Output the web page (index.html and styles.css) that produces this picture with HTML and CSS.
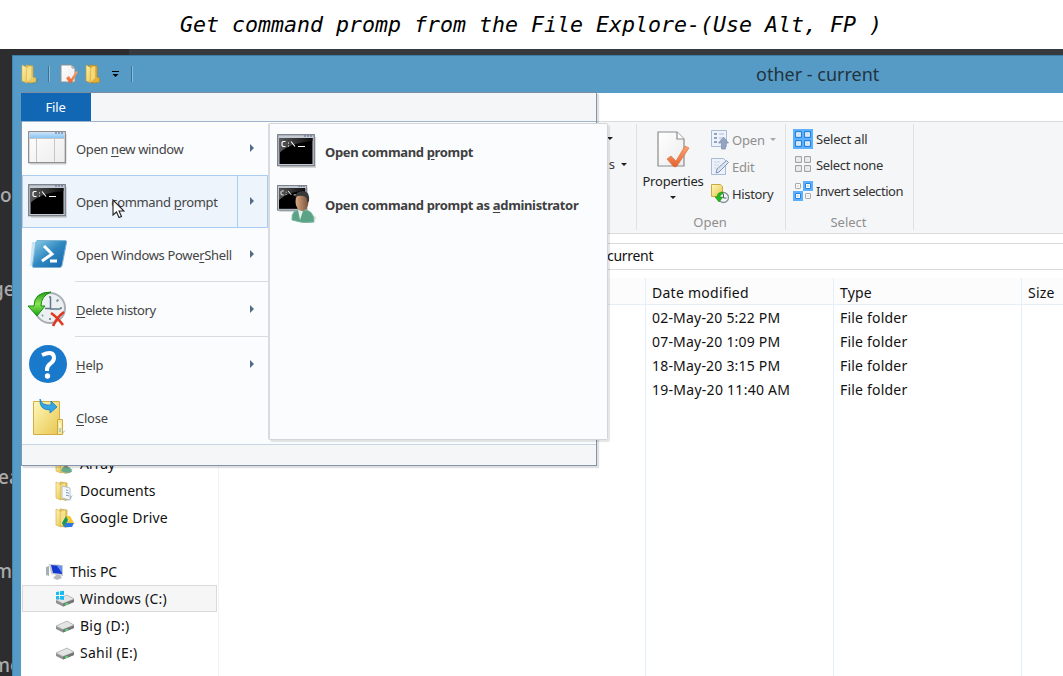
FILE: index.html
```html
<!DOCTYPE html>
<html lang="en">
<head>
<meta charset="utf-8">
<title>other - current</title>
<link rel="stylesheet" href="styles.css">
</head>
<body>
<svg class="defs" width="0" height="0" aria-hidden="true">
  <defs>
    <linearGradient id="gold" x1="0" y1="0" x2="1" y2="1"><stop offset="0" stop-color="#fff7b8"/><stop offset="1" stop-color="#e8c650"/></linearGradient>
    <linearGradient id="paper" x1="0" y1="0" x2="1" y2="1"><stop offset="0" stop-color="#fff"/><stop offset="1" stop-color="#ececec"/></linearGradient>
    <linearGradient id="sky" x1="0" y1="0" x2="0" y2="1"><stop offset="0" stop-color="#c3e2fb"/><stop offset="1" stop-color="#8cc4f4"/></linearGradient>
    <linearGradient id="shell" x1="0" y1="0" x2="1" y2="1"><stop offset="0" stop-color="#8ed0ea"/><stop offset=".5" stop-color="#2f87bf"/><stop offset="1" stop-color="#1565ad"/></linearGradient>
    <linearGradient id="gloss" x1="0" y1="0" x2="1" y2="0"><stop offset="0" stop-color="#5a5a5a"/><stop offset="1" stop-color="#0c0c0c"/></linearGradient>
    <linearGradient id="green" x1="0" y1="0" x2="0" y2="1"><stop offset="0" stop-color="#2a9a1c"/><stop offset=".5" stop-color="#8be455"/><stop offset="1" stop-color="#18a012"/></linearGradient>
    <linearGradient id="orange" x1="0" y1="0" x2="0" y2="1"><stop offset="0" stop-color="#f9a673"/><stop offset="1" stop-color="#e4632f"/></linearGradient>
    <linearGradient id="skin" x1="0" y1="0" x2="1" y2="0"><stop offset="0" stop-color="#d9a981"/><stop offset="1" stop-color="#765039"/></linearGradient>
    <symbol id="folder" viewBox="0 0 18 20">
      <path d="M13 17l5-3-3 5-6 1z" fill="#39718f" opacity=".45"/>
      <path d="M5 1l7 1v11l3 1v4l-5 1-5-1z" fill="#e6c965" stroke="#c4a03d" stroke-width=".7"/>
      <path d="M1 1l5 2.500V19l-5-2z" fill="url(#gold)" stroke="#d2b04e" stroke-width=".7"/>
      <path d="M6 4l4-2v12l-4 4z" fill="#f4df8b"/>
    </symbol>
    <symbol id="check" viewBox="0 0 34 38">
      <path d="M2 1h19l7 7v27H2z" fill="url(#paper)" stroke="#8c8c8c" stroke-width="1.2"/>
      <path d="M21 1v7h7" fill="#fff" stroke="#8c8c8c" stroke-width="1.2"/>
      <path d="M11 28l4-3 5 5 9-15 4 2-12 18q-2 2-4 0z" fill="url(#orange)" stroke="#d96532" stroke-width=".6"/>
    </symbol>
    <symbol id="console" viewBox="0 0 39 34">
      <path d="M3 33h36V3" fill="none" stroke="#c9c9c9" stroke-width="1.5"/>
      <rect x=".7" y=".7" width="36.6" height="31" fill="#c5cbd4" stroke="#747a84" stroke-width="1.2"/>
      <rect x="2.5" y="4" width="33" height="26" fill="#000"/>
      <path d="M2.500 4h33v3Q12 9 2.500 19z" fill="url(#gloss)"/>
      <path d="M27 2h2m1 0h2m1 0h2" stroke="#59658a"/>
      <path d="M8.500 7.500H6l-1 1v3l1 1h2.500M11.500 8.500v1m0 2v1M14 7.500l4 5M21 12.500h7" fill="none" stroke="#fff" stroke-width="1.1"/>
    </symbol>
    <symbol id="drive" viewBox="0 0 20 13">
      <path d="M1 6L12 1l7 4v3L8 12.500 1 9z" fill="#8e9091"/>
      <path d="M1 6L12 1l7 4L8 9.500z" fill="#e3e4e4" stroke="#a7a9a9" stroke-width=".6"/>
      <path d="M8 9.500l11-4v2.500L8 12.500z" fill="#717575"/>
      <path d="M10 10.500l3-1" stroke="#52e071" stroke-width="1.4"/>
    </symbol>
    <symbol id="tile" viewBox="0 0 6 6">
      <rect x=".5" y=".5" width="5" height="5" rx=".5" fill="#fafafa" stroke="currentColor"/>
      <rect x="2" y="2" width="2" height="2" fill="currentColor" opacity=".25"/>
    </symbol>
  </defs>
</svg>

<header class="caption">Get command promp from the File Explore-(Use Alt, FP )</header>

<main class="desktop">
  <aside class="backdrop">
    <span class="frag f1">o</span><span class="frag f2">ge</span><span class="frag f3">ea</span><span class="frag f4">m</span><span class="frag f5">me</span>
  </aside>

  <section class="window">
    <div class="titlebar">
      <div class="quick">
        <svg width="18" height="20"><use href="#folder"/></svg>
        <i class="bar"></i>
        <svg class="q-check" width="18" height="20" viewBox="0 0 18 20"><path d="M1 1h11l3 3v14H1z" fill="url(#paper)" stroke="#8d9296"/><path d="M12 1v3h3" fill="none" stroke="#8d9296"/><path d="M6 14l3-2 2 3 5-8 2 1-6 10q-2 2-3 0z" fill="url(#orange)"/></svg>
        <svg class="q-folder" width="18" height="20" viewBox="0 0 18 20"><path d="M5 1l7 1v11l2.500 1v4l-4.500 1-5-1z" fill="#e0b23c" stroke="#b98a1d" stroke-width=".8"/><path d="M1 1l5 2.500V19l-5-2z" fill="url(#gold)" stroke="#c79b2c" stroke-width=".8"/><path d="M6 4l4-2v12l-4 4z" fill="#f5d777"/></svg>
        <svg class="q-more" width="9" height="7" viewBox="0 0 9 7"><path d="M1 .5h7" stroke="#000"/><path d="M1.500 3h6l-3 3z"/></svg>
        <i class="bar"></i>
      </div>
      <h1 class="title">other - current</h1>
    </div>
    <div class="tabs"></div>

    <div class="ribbon">
      <div class="group g-prev">
        <i class="caret"></i>
        <span class="prev">s <i class="caret"></i></span>
      </div>
      <div class="group g-open">
        <div class="tools">
          <div class="big">
            <svg width="34" height="38"><use href="#check"/></svg>
            <span class="t-prop">Properties</span>
            <i class="caret"></i>
          </div>
          <div class="stack">
            <div class="tool off"><svg width="18" height="20" viewBox="0 0 18 20"><path d="M.5.500h15v16H.5z" fill="#eef3fb" stroke="#a9bbd6"/><path d="M3 3h3v2H3zm0 4h3v2H3zm0 4h3v2H3z" fill="#8ea3c5"/><path d="M8 4h5M8 8h3" stroke="#aebcd3"/><path d="M12.500 7l5 6h-3v6h-4v-6h-3z" fill="#93a4c1" stroke="#7e90b0" stroke-width=".7"/></svg><span class="t-open">Open</span><i class="caret"></i></div>
            <div class="tool off"><svg width="18" height="20" viewBox="0 0 18 20"><path d="M.5 1.500h12l2 2v14H.5z" fill="#edf2fa" stroke="#a9bbd6"/><path d="M3 5h6M3 8h5M3 11h3" stroke="#c8d4e6"/><path d="M5 16l1-4L15.500 3.500l2 2L8 15z" fill="#dce5f1" stroke="#7f94b6"/></svg><span class="t-edit">Edit</span></div>
            <div class="tool"><svg width="18" height="20" viewBox="0 0 18 20"><path d="M.5.500h9l2 2v10H.5z" fill="url(#gold)" stroke="#cda83c"/><circle cx="12.500" cy="13.500" r="5" fill="#f3f5f6" stroke="#86919a" stroke-width="1.300"/><path d="M12.500 10v4h3" fill="none" stroke="#536577"/><path d="M12 8q-6 0-6 5H4l4 5 4-5H9q0-3 3-3z" fill="#25b71b" stroke="#188312" stroke-width=".5"/></svg><span class="t-hist">History</span></div>
          </div>
        </div>
        <div class="label">Open</div>
      </div>
      <div class="group g-select">
        <div class="picks">
          <div class="tool"><svg width="20" height="20" viewBox="0 0 20 20" color="#2283dc"><path d="M0 0h20v20H0z" fill="#5db0ff"/><use href="#tile" x="2" y="2" width="7" height="7"/><use href="#tile" x="11" y="2" width="7" height="7"/><use href="#tile" x="2" y="11" width="7" height="7"/><use href="#tile" x="11" y="11" width="7" height="7"/></svg><span class="t-all">Select all</span></div>
          <div class="tool"><svg width="20" height="20" viewBox="0 0 20 20" color="#a3a3a3"><use href="#tile" x="2" y="1" width="7" height="7"/><use href="#tile" x="11" y="1" width="7" height="7"/><use href="#tile" x="2" y="10" width="7" height="7"/><use href="#tile" x="11" y="10" width="7" height="7"/></svg><span class="t-none">Select none</span></div>
          <div class="tool"><svg width="20" height="20" viewBox="0 0 20 20"><path d="M10 0h10v10H10zM0 10h10v10H0z" fill="#5db0ff"/><g color="#aaa"><use href="#tile" x="2" y="2" width="6" height="6"/><use href="#tile" x="12" y="12" width="6" height="6"/></g><g color="#2283dc"><use href="#tile" x="12" y="2" width="6" height="6"/><use href="#tile" x="2" y="12" width="6" height="6"/></g></svg><span class="t-inv">Invert selection</span></div>
        </div>
        <div class="label">Select</div>
      </div>
    </div>

    <div class="address"><span>current</span></div>

    <div class="content">
      <nav class="tree">
        <div class="node sub"><svg width="20" height="20" viewBox="0 0 20 20"><use href="#folder" width="18" height="20"/><circle cx="11" cy="10" r="3" fill="#a9795a"/><path d="M6 17q1-5 6-4 4 0 5 5-6 2-11-1z" fill="#66a98b"/></svg><span class="n-arr">Array</span></div>
        <div class="node sub"><svg width="20" height="20" viewBox="0 0 20 20"><use href="#folder" width="18" height="20"/><path d="M7 5l8 2v12l-8-2z" fill="#f4f8fc" stroke="#a9b7c4" stroke-width=".8"/><path d="M11 9l2 .5m-2 2l3 .7m-3 2l3 .7" stroke="#799bc5"/></svg><span class="n-doc">Documents</span></div>
        <div class="node sub"><svg width="20" height="20" viewBox="0 0 20 20"><use href="#folder" width="18" height="20"/><path d="M11 8h4l4 7h-4z" fill="#fbc42b"/><path d="M11 8l2 4-4 7-2-4z" fill="#159b54"/><path d="M11 15h8l-2 4H9z" fill="#2d76e8"/></svg><span class="n-drv">Google Drive</span></div>
        <div class="node"></div>
        <div class="node root"><svg width="20" height="18" viewBox="0 0 20 18"><path d="M1 4l3-1v10l-3-1z" fill="#a7b0b5"/><path d="M4 1l14 1v11L6 11z" fill="#c5ccd4"/><path d="M6 2l11 1v8L8 10z" fill="#1738d0"/><path d="M12 3h5v7z" fill="#6293f2"/><path d="M11 12h4l2 3-5 2-4-2z" fill="#b7bbbe"/></svg><span class="n-pc">This PC</span></div>
        <div class="node sub picked"><svg width="20" height="18" viewBox="0 0 20 18"><use href="#drive" y="4" width="20" height="13"/><path d="M1 2l3-.5v3.500H1zm4-.7L9 .8V5H5zM1 6h3v3.500L1 9zm4 0h4v4l-4-.5z" fill="#18bdf2"/></svg><span class="n-c">Windows (C:)</span></div>
        <div class="node sub"><svg width="20" height="14"><use href="#drive" y="1" width="20" height="13"/></svg><span class="n-d">Big (D:)</span></div>
        <div class="node sub"><svg width="20" height="14"><use href="#drive" y="1" width="20" height="13"/></svg><span class="n-e">Sahil (E:)</span></div>
      </nav>
      <div class="files">
        <div class="col"><div class="head"></div></div>
        <div class="col"><div class="head"><span class="h-date">Date modified</span></div><span class="d1">02-May-20 5:22 PM</span><span class="d1">07-May-20 1:09 PM</span><span class="d1">18-May-20 3:15 PM</span><span class="d2">19-May-20 11:40 AM</span></div>
        <div class="col"><div class="head"><span>Type</span></div><span class="ff">File folder</span><span class="ff">File folder</span><span class="ff">File folder</span><span class="ff">File folder</span></div>
        <div class="col"><div class="head"><span>Size</span></div></div>
      </div>
    </div>

    <div class="menu">
      <div class="menu-top"><span class="file-tab">File</span></div>
      <div class="menu-list">
        <div class="item"><svg width="39" height="34" viewBox="0 0 39 34"><path d="M2 33h36V3" fill="none" stroke="#ccc"/><rect x=".7" y=".7" width="36.600" height="31" fill="url(#paper)" stroke="#858585" stroke-width="1.200"/><path d="M1.500 1.500h35V7h-35z" fill="url(#sky)"/><path d="M1 7.500h36M8.500 8v23M26.500 8v23" stroke="#c6c6c6"/><path d="M27 2h2m1 0h2m1 0h2" stroke="#59658a"/></svg><span class="m1">Open <u>n</u>ew window</span><i class="next"></i></div>
        <div class="item hot"><svg width="39" height="34"><use href="#console"/></svg><span class="m2">Open command <u>p</u>rompt</span><i class="next"></i></div>
        <div class="item"><svg width="39" height="30" viewBox="0 0 39 30"><path d="M4 3h5L6 27H2z" fill="#a9d5ed" opacity=".6"/><path d="M9 1.500h28q2 0 1.500 2l-4.500 23q-.5 2-2.500 2H6q-2 0-1.500-2L8 3z" fill="url(#shell)" stroke="#7db4d4"/><path d="M16 7l8 8-10 7M22 22h7" fill="none" stroke="#fff" stroke-width="3"/></svg><span class="m3">Open Windows Powe<u>r</u>Shell</span><i class="next"></i></div>
        <div class="rule"></div>
        <div class="item"><svg width="39" height="36" viewBox="0 0 39 36"><circle cx="22" cy="17" r="15" fill="#edf0f2" stroke="#a9b0b5" stroke-width="2"/><path d="M22 5v2m0 20v2M34 17h-2M30.500 8.500l-2 2M14 25l1-1" stroke="#8195a0" stroke-width="2"/><path d="M22.500 6v12h10M22 17.500H17" fill="none" stroke="#60788b" stroke-width="1.500"/><path d="M23 1Q6 1 6 15H0l9 10 8-10h-4Q13 5 23 1z" fill="url(#green)" stroke="#158b10"/><path d="M23 22q6 4 12 12M36 21q-7 5-11 14" fill="none" stroke="#df3820" stroke-width="2.600"/></svg><span class="m4"><u>D</u>elete history</span><i class="next"></i></div>
        <div class="rule"></div>
        <div class="item"><svg width="39" height="38" viewBox="0 0 39 38"><circle cx="20" cy="19" r="19" fill="#1979ca"/><path d="M14 10q12-5 12 3 0 3-4 6-3 2-3 6v1" fill="none" stroke="#fff" stroke-width="4"/><circle cx="19.500" cy="31" r="2.700" fill="#fff"/></svg><span class="m5"><u>H</u>elp</span><i class="next"></i></div>
        <div class="item"><svg width="39" height="38" viewBox="0 0 39 38"><path d="M30 36l8-4-4 5z" fill="#aaa" opacity=".6"/><path d="M5.500 3.500h26v33h-26z" fill="url(#gold)" stroke="#d2ad46"/><path d="M29.500 21.500h5v15h-5z" fill="#f6e899" stroke="#cfa83f"/><path d="M32 25v8" stroke="#fff"/><path d="M32 30v4" stroke="#67acdc"/><path d="M12 1q2 7 11 6V3l6 6-7 6v-3Q11 12 12 1z" fill="#35a5e5" stroke="#187fc0" stroke-width=".8"/></svg><span class="m6"><u>C</u>lose</span></div>
      </div>
      <div class="submenu">
        <div class="subitem"><svg width="39" height="34"><use href="#console"/></svg><span class="s1">Open command <u>p</u>rompt</span></div>
        <div class="subitem"><svg width="39" height="38" viewBox="0 0 39 38"><use href="#console" width="31" height="27"/><ellipse cx="33" cy="33" rx="6" ry="3" fill="#bbb" opacity=".6"/><path d="M15 35q-1-11 10-10 12-1 12 12-11 2-22-2z" fill="#5aa386" stroke="#78b6a0"/><path d="M21 25l2 10 3-9z" fill="#e6efeb"/><ellipse cx="25" cy="16.500" rx="6.500" ry="9.500" fill="url(#skin)"/><path d="M18 12q1-6 8-6 7 0 6 10l-2 2q1-6-4-7-4-1-8 1z" fill="#39393a"/></svg><span class="s2">Open command prompt as <u>a</u>dministrator</span></div>
      </div>
    </div>

    <svg class="cursor" width="13" height="20" viewBox="0 0 13 20"><path d="M1 1v15l3.500-3 2.500 5.500 2.500-1L7 12h5z" fill="#fff" stroke="#222" stroke-width="1.100"/></svg>
  </section>
</main>
</body>
</html>
```

FILE: styles.css
```css
* { box-sizing: border-box; }
body { margin: 0; width: 1063px; height: 676px; overflow: hidden; background: #fff; font-family: "Noto Sans", "Open Sans", sans-serif; font-size: 13px; color: #3b3b3b; white-space: nowrap; }
svg { display: block; flex: none; }
.defs { position: absolute; }
.caption { height: 49px; padding-left: 180px; font: italic 21.6px/49px "DejaVu Sans Mono", monospace; color: #000; }
.desktop { display: flex; height: 627px; padding-top: 6px; background: linear-gradient(90deg, #2d2d30 129px, #363a3f 129px); }
.backdrop { width: 12px; flex: none; overflow: hidden; background: #2d2d30; font-size: 19px; font-weight: 500; line-height: 30px; color: #ababab; display: flex; flex-direction: column; }
.frag { height: 30px; }
.f1 { margin-top: 125px; }
.f2 { margin: 64px 0 0 -8px; }
.f3 { margin: 158px 0 0 -2px; }
.f4 { margin: 64px 0 0 -6px; }
.f5 { margin: 64px 0 0 -8px; }

.window { position: relative; flex: 1; display: flex; flex-direction: column; padding-left: 9px; background: #559bc6; border-top: 1px solid #3c7da5; box-shadow: inset 1px 0 #4385ad; overflow: hidden; }
.titlebar { height: 37px; flex: none; display: flex; align-items: center; }
.quick { display: flex; align-items: center; width: 735px; flex: none; padding-bottom: 1px; }
.bar { width: 2px; height: 16px; margin-left: 9px; background: #3b7191; border-right: 1px solid #8abddc; }
.q-check { margin-left: 10px; }
.q-folder { margin-left: 7px; }
.q-more { margin-left: 8px; }
.q-more + .bar { margin-left: 11px; }
.title { margin: 0; padding-bottom: 2px; font-size: 18px; font-weight: 400; color: #23333d; }
.tabs { height: 28px; flex: none; background: #fff; }

.ribbon { height: 113px; flex: none; display: flex; background: #f5f6f8; border: solid #dadbdc; border-width: 1px 0; padding: 2px 0 3px; }
.group { border-right: 1px solid #dfe0e2; display: flex; flex-direction: column; }
.g-prev { width: 616px; align-items: flex-end; padding: 13px 9px 0 0; }
.g-prev > .caret { margin-right: 14px; }
.prev { display: flex; align-items: center; gap: 6px; margin-top: 15px; }
.caret { width: 0; height: 0; border: 3px solid transparent; border-top-color: #1f1f1f; border-bottom: 0; }
.g-open { width: 149px; }
.tools { display: flex; height: 88px; flex: none; }
.big { width: 74px; display: flex; flex-direction: column; align-items: center; padding: 7px 2px 0 0; color: #262626; }
.big .t-prop { margin: 3px 0 6px; line-height: 18px; letter-spacing: -.2px; }
.stack { padding-top: 2px; }
.tool { display: flex; align-items: center; gap: 3px; height: 27px; color: #333; }
.t-open { letter-spacing: -.2px; }
.t-edit { letter-spacing: -.2px; }
.t-hist { letter-spacing: -.35px; }
.t-all { letter-spacing: -.2px; }
.t-none { letter-spacing: -.35px; }
.t-inv { letter-spacing: -.45px; }
.off { color: #8f8f8f; }
.off .caret { margin-left: 2px; border-top-color: #a7a7a7; }
.label { height: 20px; flex: none; padding-right: 2px; text-align: center; line-height: 20px; color: #8f8f8f; }
.g-select { width: 128px; }
.picks { height: 88px; flex: none; padding: 2px 0 0 7px; }
.picks .tool { height: 26px; }

.address { height: 44px; flex: none; background: #fff; padding-top: 9px; }
.address span { display: block; height: 27px; padding-left: 586px; border: solid #dadada; border-width: 1px 0; font-size: 14px; letter-spacing: -.3px; line-height: 23px; color: #111; }
.content { flex: 1; display: flex; background: #fff; color: #111; font-size: 14px; }
.tree { width: 198px; flex: none; border-right: 1px solid #f3f3f3; padding: 172px 1px 0; }
.node { height: 27px; display: flex; align-items: center; border: 1px solid transparent; }
.sub { padding-left: 32px; gap: 5px; }
.root { padding-left: 22px; gap: 5px; }
.n-drv, .n-c { letter-spacing: .2px; }
.n-d, .n-e { letter-spacing: .25px; }
.n-pc { letter-spacing: -.1px; }
.picked { background: #f6f6f6; border-color: #dadada; }
.files { display: grid; grid-template-columns: 427px 188px 188px 1fr; flex: 1; }
.col { border-right: 1px solid #e6eff9; display: flex; flex-direction: column; line-height: 24px; letter-spacing: .2px; }
.col:last-child { border-right: 0; }
.col > span, .head span { padding-left: 6px; }
.h-date, .d2 { letter-spacing: .27px; }
.head { height: 27px; margin-bottom: 1px; line-height: 29px; background: #fcfcfc; border-bottom: 1px solid #e6eff9; }

.menu { position: absolute; left: 9px; top: 36px; width: 576px; height: 374px; display: flex; flex-direction: column; background: #f5f6f8; border: 1px solid #8494aa; border-top-color: #7b8da3; box-shadow: 2px 2px 1px rgba(0,0,0,.12); }
.menu-top { height: 29px; flex: none; border-bottom: 1px solid #9fb3cb; }
.file-tab { display: block; width: 70px; height: 28px; margin: 0 0 0 -1px; background: #1267b5; color: #fff; text-align: center; line-height: 29px; letter-spacing: -.15px; padding-right: 1px; }
.menu-list { height: 323px; flex: none; background: #fbfcfe; border-bottom: 1px solid #c5d5e8; color: #444; letter-spacing: -.33px; }
.item { width: 246px; height: 53px; display: flex; align-items: center; padding: 0 0 2px 6px; }
.item > span { margin-left: 9px; padding-top: 2px; }
.subitem > span { margin-left: 9px; padding-top: 2px; }
u { text-underline-offset: 2px; }
.m1, .m4 { letter-spacing: -.38px; }
.m5, .m6 { letter-spacing: -.25px; }
.next { margin-left: auto; margin-right: 14px; width: 0; height: 0; border: 4px solid transparent; border-left: 4px solid #526b8b; border-right: 0; }
.hot { background: linear-gradient(90deg, #edf4fc 215px, #a9cdf3 215px, #a9cdf3 216px, #edf4fc 216px); box-shadow: inset 0 0 0 1px #a9cdf3; }
.rule { height: 2px; margin-left: 53px; width: 193px; border-top: 1px solid #d9dcdf; }
.submenu { position: absolute; left: 246px; top: 30px; width: 340px; height: 317px; background: #fbfcfe; border: 1px solid #d3d5d8; border-left: 2px solid #d9dbde; border-radius: 2px; box-shadow: 2px 2px 1px rgba(0,0,0,.1); font-weight: 700; color: #404040; letter-spacing: -.34px; }
.subitem { height: 53px; display: flex; align-items: center; padding-left: 7px; }
.cursor { position: absolute; left: 100px; top: 143px; }
```
